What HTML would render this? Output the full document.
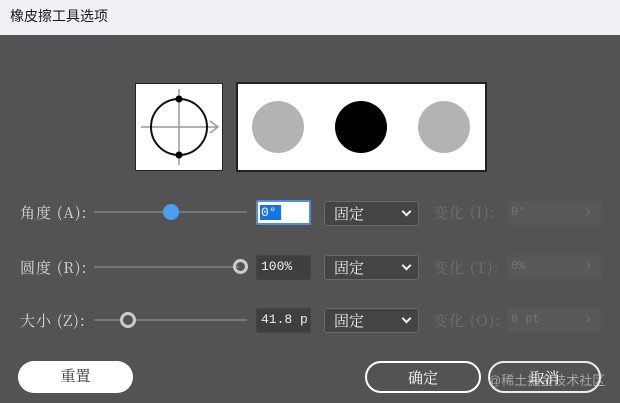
<!DOCTYPE html>
<html><head><meta charset="utf-8"><style>
*{box-sizing:border-box;margin:0;padding:0}
body{width:620px;height:403px;background:#535353;font-family:"Liberation Serif","Noto Serif CJK SC",serif;position:relative;overflow:hidden;color:#e8e8e8}
.title{position:absolute;left:0;top:0;width:620px;height:35px;background:#eff1f6;color:#1a1a1a;font-family:"Liberation Sans","Noto Sans CJK SC",sans-serif;font-size:14px;line-height:33px;padding-left:10px}
.a{position:absolute}
.lbl{font-size:15px;color:#d8d8d8;letter-spacing:1px;font-family:"Noto Serif CJK SC",serif;line-height:18px}
.track{height:2px;background:#777}
.inp{border:1px solid #444;background:#3f3f3f;color:#eee;font-family:"Liberation Mono",monospace;font-size:13px;line-height:22px;padding-left:4px;border-radius:2px}
.dd{border:1px solid #6a6a6a;background:#444;border-radius:3px;font-size:15px;line-height:24px;padding-left:9px;color:#f2f2f2;font-family:"Noto Serif CJK SC",serif}
.dd:after{content:"";position:absolute;right:8px;top:6px;width:5px;height:5px;border-right:2px solid #eee;border-bottom:2px solid #eee;transform:rotate(45deg)}
.dl{font-size:15px;color:#6f6f6f;letter-spacing:1px;font-family:"Noto Serif CJK SC",serif;line-height:18px}
.df{background:#585858;border-radius:2px;color:#777;font-family:"Liberation Mono",monospace;font-size:12px;line-height:22px;padding-left:4px}
.df:after{content:"›";position:absolute;right:8px;top:0;color:#707070;font-size:16px}
.btn{border-radius:17px;font-size:15px;text-align:center;line-height:30px;font-family:"Noto Serif CJK SC",serif}
</style></head><body>
<div class="title">橡皮擦工具选项</div>
<div class="a" style="left:135px;top:83px;width:88px;height:88px;background:#fff;border:1px solid #222">
<svg width="86" height="86" viewBox="0 0 86 86"><line x1="5" y1="43" x2="82" y2="43" stroke="#999" stroke-width="1.5"/><polyline points="74,37 82,43 74,49" fill="none" stroke="#999" stroke-width="1.5"/><line x1="43" y1="5" x2="43" y2="81" stroke="#999" stroke-width="1.5"/><circle cx="43" cy="43" r="28" fill="none" stroke="#111" stroke-width="2"/><circle cx="43" cy="15" r="3.5" fill="#000"/><circle cx="43" cy="71" r="3.5" fill="#000"/></svg></div>
<div class="a" style="left:236px;top:82px;width:251px;height:90px;background:#fff;border:2px solid #222">
<div class="a" style="left:14px;top:17px;width:52px;height:52px;border-radius:50%;background:#b3b3b3"></div>
<div class="a" style="left:97px;top:17px;width:52px;height:52px;border-radius:50%;background:#000"></div>
<div class="a" style="left:180px;top:17px;width:52px;height:52px;border-radius:50%;background:#b3b3b3"></div>
</div>

<div class="a lbl" style="left:20px;top:204px">角度 (A):</div>
<div class="a track" style="left:94px;top:211px;width:153px"></div>
<div class="a" style="left:163px;top:204px;width:16px;height:16px;border-radius:50%;background:#4a9ff5"></div>
<div class="a inp" style="left:256px;top:200px;width:55px;height:25px;background:#fff;border:2px solid #4a8fe0;color:#fff;padding-left:2px"><span style="background:#1473e6;padding:0 4px 0 1px">0°</span></div>
<div class="a dd" style="left:324px;top:201px;width:95px;height:25px">固定</div>
<div class="a dl" style="left:433px;top:204px">变化 (I):</div>
<div class="a df" style="left:507px;top:201px;width:94px;height:24px">0°</div>

<div class="a lbl" style="left:20px;top:259px">圆度 (R):</div>
<div class="a track" style="left:94px;top:266px;width:145px"></div>
<div class="a" style="left:233px;top:259px;width:15px;height:15px;border-radius:50%;border:3px solid #ccc"></div>
<div class="a inp" style="left:256px;top:255px;width:55px;height:25px">100%</div>
<div class="a dd" style="left:324px;top:255px;width:95px;height:25px">固定</div>
<div class="a dl" style="left:433px;top:259px">变化 (T):</div>
<div class="a df" style="left:507px;top:255px;width:94px;height:24px">0%</div>

<div class="a lbl" style="left:20px;top:312px">大小 (Z):</div>
<div class="a track" style="left:94px;top:319px;width:153px"></div>
<div class="a" style="left:120px;top:312px;width:16px;height:16px;border-radius:50%;border:3px solid #ccc;background:#535353"></div>
<div class="a inp" style="left:256px;top:308px;width:55px;height:25px">41.8 p</div>
<div class="a dd" style="left:324px;top:308px;width:95px;height:25px">固定</div>
<div class="a dl" style="left:433px;top:312px">变化 (O):</div>
<div class="a df" style="left:507px;top:308px;width:94px;height:24px">0 pt</div>

<div class="a btn" style="left:18px;top:361px;width:115px;height:32px;background:#fff;color:#333">重置</div>
<div class="a btn" style="left:365px;top:361px;width:116px;height:32px;border:2px solid #fff;color:#fff">确定</div>
<div class="a btn" style="left:488px;top:361px;width:113px;height:32px;border:2px solid #eee;color:#fff">取消</div>
<div class="a" style="left:488px;top:370px;font-size:13px;color:rgba(220,220,220,.6);font-family:'Liberation Sans','Noto Sans CJK SC',sans-serif">@稀土掘金技术社区</div>
</body></html>
